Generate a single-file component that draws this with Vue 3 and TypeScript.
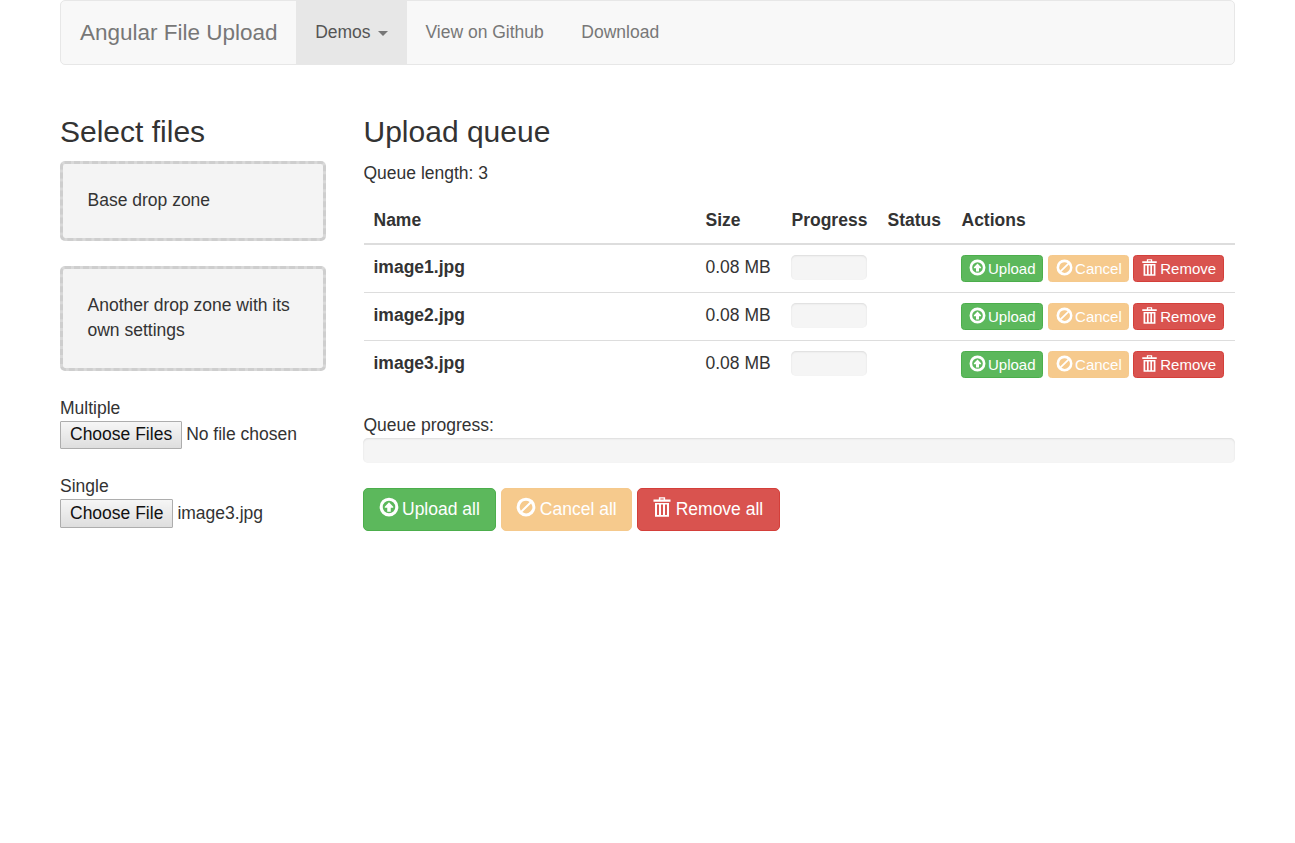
<template>
  <div class="page">
    <nav class="navbar">
      <a class="brand">Angular File Upload</a>
      <ul class="nav">
        <li class="open">Demos <span class="caret"></span></li>
        <li>View on Github</li>
        <li>Download</li>
      </ul>
    </nav>

    <div class="row">
      <aside class="side">
        <h3>Select files</h3>
        <div class="drop-zone">Base drop zone</div>
        <div class="drop-zone">Another drop zone with its own settings</div>

        <div class="picker">
          <div>Multiple</div>
          <div class="file-input"><button type="button">Choose Files</button><span>No file chosen</span></div>
        </div>
        <div class="picker">
          <div>Single</div>
          <div class="file-input"><button type="button">Choose File</button><span>image3.jpg</span></div>
        </div>
      </aside>

      <main class="queue">
        <h3>Upload queue</h3>
        <p class="length">Queue length: {{ files.length }}</p>

        <table>
          <thead>
            <tr>
              <th class="col-name">Name</th>
              <th class="col-size">Size</th>
              <th class="col-progress">Progress</th>
              <th class="col-status">Status</th>
              <th>Actions</th>
            </tr>
          </thead>
          <tbody>
            <tr v-for="file in files" :key="file">
              <td><strong>{{ file }}</strong></td>
              <td>0.08 MB</td>
              <td><div class="progress progress-sm"></div></td>
              <td></td>
              <td class="actions">
                <button type="button" class="btn xs success">
                  <svg class="icon" viewBox="0 0 16 16"><path fill-rule="evenodd" :d="uploadIcon" /></svg>Upload
                </button>
                <button type="button" class="btn xs warning">
                  <svg class="icon" viewBox="0 0 16 16"><path fill-rule="evenodd" :d="cancelIcon" /></svg>Cancel
                </button>
                <button type="button" class="btn xs danger">
                  <svg class="icon" viewBox="0 0 16 16"><path fill-rule="evenodd" :d="trashIcon" /></svg>Remove
                </button>
              </td>
            </tr>
          </tbody>
        </table>

        <div class="total">
          <div>Queue progress:</div>
          <div class="progress"></div>
        </div>

        <div class="bulk">
          <button type="button" class="btn success">
            <svg class="icon" viewBox="0 0 16 16"><path fill-rule="evenodd" :d="uploadIcon" /></svg>Upload all
          </button>
          <button type="button" class="btn warning">
            <svg class="icon" viewBox="0 0 16 16"><path fill-rule="evenodd" :d="cancelIcon" /></svg>Cancel all
          </button>
          <button type="button" class="btn danger">
            <svg class="icon" viewBox="0 0 16 16"><path fill-rule="evenodd" :d="trashIcon" /></svg>Remove all
          </button>
        </div>
      </main>
    </div>
  </div>
</template>

<script setup lang="ts">
const files: string[] = ['image1.jpg', 'image2.jpg', 'image3.jpg']

const uploadIcon =
  'M8 .5a7.5 7.5 0 1 0 0 15a7.5 7.5 0 0 0 0-15zM8 3a5 5 0 1 1 0 10a5 5 0 0 1 0-10zM8 4.2L4.6 7.8V8.6H6.6V11.8H9.4V8.6H11.4V7.8z'
const cancelIcon =
  'M8 .5a7.5 7.5 0 1 0 0 15a7.5 7.5 0 0 0 0-15zM8 3a5 5 0 0 1 2.9.93L3.93 10.9A5 5 0 0 1 8 3zM12.07 5.1A5 5 0 0 1 5.1 12.07z'
const trashIcon =
  'M5.5 .2H10.5V2H14.8V3.8H1.2V2H5.5zM6.7 1.1V2H9.3V1.1zM2.4 4.8H13.6V15.8H2.4zM4 6V14.3H5.6V6zM7.2 6V14.3H8.8V6zM10.4 6V14.3H12V6z'
</script>

<style>
html,
body {
  margin: 0;
  background: #fff;
}
</style>

<style scoped>
.page {
  padding: 0 60px;
  font-family: "Liberation Sans", Arial, sans-serif;
  font-size: 17.5px;
  line-height: 25px;
  color: #333;
}

.navbar {
  display: flex;
  height: 63px;
  background: #f8f8f8;
  border: 1px solid #e7e7e7;
  border-radius: 5px;
}

.brand {
  padding: 19px 18px 0 19px;
  font-size: 22.5px;
  color: #777;
}

.nav {
  display: flex;
  margin: 0;
  padding: 0;
  list-style: none;
}

.nav li {
  padding: 19px 18.75px 0;
  color: #777;
  white-space: nowrap;
}

.nav li.open {
  padding-left: 19.5px;
  background: #e7e7e7;
  color: #555;
}

.caret {
  display: inline-block;
  margin-left: 2.5px;
  vertical-align: middle;
  border-top: 5px solid #777;
  border-left: 5px solid transparent;
  border-right: 5px solid transparent;
}

.row {
  display: grid;
  grid-template-columns: 266px 871.5px;
  column-gap: 37.5px;
  margin-top: 50px;
}

h3 {
  margin: 0 0 13px;
  font-size: 30px;
  font-weight: 500;
  line-height: 33px;
}

.drop-zone {
  box-sizing: border-box;
  margin-bottom: 25px;
  padding: 23.5px 24.5px 25.5px;
  min-height: 80px;
  background: linear-gradient(#f4f4f4, #f4f4f4) padding-box, #d9d9d9 border-box;
  border: 3px dashed #cecece;
  border-radius: 5px;
}

.picker {
  margin-bottom: 25px;
}

.file-input {
  display: flex;
  align-items: flex-start;
  height: 28px;
}

.file-input span {
  line-height: 26px;
}

.file-input button {
  box-sizing: border-box;
  height: 28px;
  margin-right: 4px;
  padding: 0 9px 2px;
  background: linear-gradient(#f6f6f6, #dedede);
  border: 1px solid #adadad;
  border-radius: 1px;
  color: #111;
  font: inherit;
  line-height: 24px;
}

.picker:last-child button {
  height: 29px;
}

.picker:last-child span {
  line-height: 28px;
}

.length {
  margin: 0 0 11px;
}

table {
  width: 871.5px;
  border-collapse: collapse;
  table-layout: fixed;
}

th {
  height: 47px;
  padding: 0 10px;
  box-sizing: border-box;
  border-bottom: 2.5px solid #ddd;
  text-align: left;
  font-weight: 700;
}

td {
  padding: 10px;
  box-sizing: border-box;
  border-top: 1px solid #ddd;
  vertical-align: top;
}

tbody tr:first-child td {
  border-top: 0;
}

.col-name {
  width: 332px;
}

.col-size {
  width: 86px;
}

.col-progress {
  width: 96px;
}

.col-status {
  width: 74px;
}

.progress {
  height: 25px;
  background: #f5f5f5;
  border-radius: 5px;
  box-shadow: inset 0 1px 2px rgba(0, 0, 0, 0.1);
}

.progress-sm {
  width: 76px;
  margin-left: -0.5px;
}

td.actions {
  padding-left: 9.5px;
  padding-right: 0;
  white-space: nowrap;
  font-size: 0;
  line-height: 0;
}

.btn {
  display: inline-flex;
  align-items: center;
  box-sizing: border-box;
  height: 43px;
  margin-right: 5px;
  padding: 0 15px 0 14.5px;
  border: 1px solid transparent;
  border-radius: 5px;
  color: #fff;
  font: inherit;
  font-size: 17.5px;
  line-height: 25px;
  vertical-align: top;
  white-space: nowrap;
}

.btn .icon {
  width: 20px;
  height: 20px;
  margin: -5px 3.5px 0 0;
  fill: currentColor;
}

.btn.xs {
  height: 27px;
  margin-right: 4px;
  padding: 0 6.5px;
  font-size: 15px;
  border-radius: 3.5px;
}

.btn.xs.success {
  margin-right: 5px;
}

.btn.xs .icon {
  width: 17px;
  height: 17px;
  margin: -2px 2.5px 0 0;
}

.success {
  background: #5cb85c;
  border-color: #4cae4c;
}

.warning {
  background: #f6ca8d;
  border-color: #f5c98c;
}

.danger {
  background: #d9534f;
  border-color: #d43f3a;
}

.total {
  margin-top: 25px;
}

.total .progress {
  margin-left: -0.5px;
}

.bulk {
  display: flex;
  margin: 25px 0 0 -0.5px;
}

.bulk .warning {
  padding-right: 14px;
}

.bulk .danger {
  padding-right: 15.5px;
}
</style>
